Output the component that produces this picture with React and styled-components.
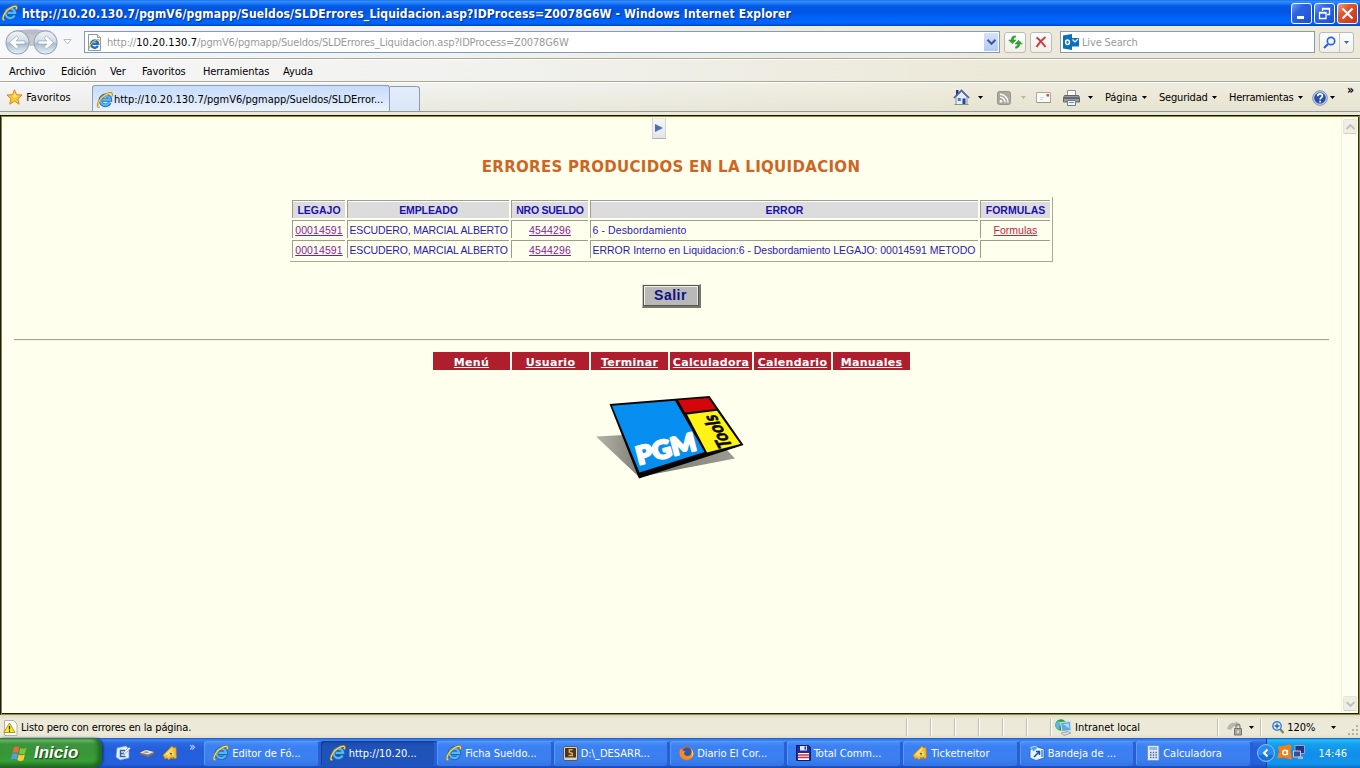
import React from "react";
import styled, { createGlobalStyle } from "styled-components";

const Global = createGlobalStyle`
  * { box-sizing: border-box; }
  body { margin: 0; background: #ece9d8; overflow: hidden; }
`;

const ui = `"DejaVu Sans Condensed", "DejaVu Sans", sans-serif`;

const Window = styled.div`
  display: flex; flex-direction: column; width: 1360px; height: 768px;
  font: 11px/14px ${ui}; color: #000; white-space: nowrap; cursor: default;
`;
const Label = styled.span`
  letter-spacing: ${(p) => p.$ls || 0}px;
  color: ${(p) => p.$color || "inherit"};
  ${(p) => p.$width && `width: ${p.$width}px;`}
  padding-top: ${(p) => p.$pt || 0}px;
  flex: none;
`;
const Svg = styled.svg`
  display: block; flex: none; overflow: visible;
  margin-left: ${(p) => p.$ml || 0}px;
  margin-top: ${(p) => p.$mt || 0}px;
`;
const Spacer = styled.div`flex: 1;`;

/* ---------- title bar ---------- */
const TitleBar = styled.div`
  height: 26px; flex: none; display: flex; align-items: center; padding: 0 2px 0 2px;
  background: linear-gradient(#0a5fe8 0, #3a93ff 1px, #2080fa 3px, #0459e6 6px, #0055e4 12px, #0063fb 18px, #0066ff 23px, #0050d8 25px, #0042bb 26px);
`;
const TitleText = styled.span`
  margin-left: 4px; margin-top: 1px; color: #fff; font: bold 12px/16px ${ui}; letter-spacing: 0.15px;
  text-shadow: 1px 1px 1px #052b83;
`;
const CaptionButton = styled.div`
  width: 21px; height: 21px; margin-left: 2px; border: 1px solid #fff; border-radius: 3px;
  display: grid; place-items: center;
  background: ${(p) => p.$close
    ? "linear-gradient(135deg, #f0a080, #e2562f 35%, #c8381a 90%)"
    : "linear-gradient(135deg, #6d9cf5, #2c62e2 35%, #2358dc 80%, #1b48b8)"};
`;

/* ---------- address row ---------- */
const AddressRow = styled.div`
  height: 33px; flex: none; display: flex; align-items: center; padding: 0 6px 0 5px;
  border-bottom: 1px solid #aca899;
  background: linear-gradient(90deg, #f6f8fa 0, #f1f2f0 400px, #ece9d8 1000px);
`;
const Field = styled.div`
  height: 22px; width: ${(p) => p.$width}px; margin-left: ${(p) => p.$ml}px; display: flex; align-items: center;
  border: 1px solid #7f9db9; background: #fff; padding-left: ${(p) => p.$pl}px; flex: none;
`;
const FieldText = styled.span`
  margin-left: ${(p) => p.$ml}px; padding-top: 2px; color: #9a9a9a; letter-spacing: ${(p) => p.$ls || 0}px;
`;
const Host = styled.span`color: #000; letter-spacing: 0.1px;`;
const DropButton = styled.div`
  width: 14px; height: 18px; margin-right: 1px; display: grid; place-items: center;
  background: linear-gradient(#d5e2fc, #b4c9f5);
`;
const SmallButton = styled.div`
  height: 21px; width: ${(p) => p.$width}px; margin-left: ${(p) => p.$ml}px; flex: none;
  border: 1px solid #b9bcc0; border-radius: 3px; display: flex; align-items: center; justify-content: center;
  background: linear-gradient(#fdfdfb, #f0efe8);
`;
const SearchSplit = styled.div`
  width: 14px; height: 19px; border-left: 1px solid #c4c6c8; display: grid; place-items: center; margin-left: 3px;
`;

/* ---------- menu and tabs ---------- */
const MenuRow = styled.div`
  height: 23px; flex: none; display: flex; align-items: center; padding: 2px 0 0 9px;
  border-bottom: 1px solid #aca899; border-top: 1px solid #fff;
  background: linear-gradient(90deg, #f6f7f7 0, #f1f1ee 500px, #ece9d8 1000px);
`;
const TabRow = styled.div`
  height: 30px; flex: none; display: flex; align-items: center;
  border-top: 1px solid #fff; border-bottom: 1px solid #919b9c;
  background: linear-gradient(rgba(255,255,255,.15), rgba(205,200,170,.18)), linear-gradient(90deg, #f3f4f6 0, #f0f0ea 500px, #ece9d8 1000px);
`;
const Tab = styled.div`
  align-self: flex-end; width: 298px; height: 26px; margin-left: 20px; padding: 2px 0 0 4px;
  display: flex; align-items: center; gap: 1px; border: 1px solid #8e9bbc; border-bottom: 0; border-radius: 3px 3px 0 0;
  background: linear-gradient(#c5dcfb, #dbe8fb 60%, #edf4fd);
`;
const NewTab = styled.div`
  align-self: flex-end; width: 30px; height: 25px; border: 1px solid #919bb4; border-left: 0; border-bottom: 0;
  border-radius: 0 3px 0 0; background: linear-gradient(#e4ecf9, #dbe6f7);
`;
const Command = styled.div`
  display: flex; align-items: center; width: ${(p) => p.$width}px; flex: none; padding-top: 1px;
`;
const CommandOverflow = styled.div`
  align-self: flex-start; width: 13px; padding-top: 1px; font: bold 12px/12px ${ui};
`;

/* ---------- document ---------- */
const Frame = styled.div`
  height: 603px; flex: none; padding-top: 3px; display: flex; background: #ece9d8;
`;
const Viewport = styled.div`
  flex: 1; display: flex; border: 1px solid #1d1d00; border-top-color: #111; border-right-color: #8a8a3c;
  border-bottom: 1px solid #8a8a3c; background: #ffffee;
  box-shadow: inset 0 1px #8f9026, inset 1px 0 #83845a, inset 0 -1px #222208, inset -1px 0 #33330c;
`;
const Page = styled.div`
  flex: 1; display: flex; flex-direction: column; align-items: center; padding-top: 2px;
`;
const ScrollTrack = styled.div`
  width: 17px; margin: 1px 1px 1px 0; padding: 2px 0 2px 1px; display: flex; flex-direction: column; justify-content: space-between;
  background: #fdfdf1; border-left: 1px solid #f3f2e0;
`;
const ScrollButton = styled.div`
  width: 14px; height: 15px; display: grid; place-items: center; background: #efeee4; border: 1px solid #e6e5d8;
  border-bottom-color: #cfcec0; border-radius: 2px;
`;
const Expander = styled.div`
  width: 14px; height: 21px; margin-right: 25px; padding: 0 0 1px 1px; display: grid; place-items: center; border: 1px solid #d3d4d9;
  border-top-color: #e8e8e8; border-bottom-color: #b0b2ba; background: linear-gradient(#f6f6f4, #e4e5ea);
`;
const Heading = styled.h1`
  margin: 18px 0 0; font: bold 15px/20px "DejaVu Sans", sans-serif; color: #cc6622; letter-spacing: 0.3px;
`;
const Table = styled.div`
  margin: 20px 0 0 1px; width: 763px; height: 65px; padding: 3px 0 0 2px; display: grid; align-content: start;
  grid-template-columns: 53px 162px 77px 388px 70px; grid-auto-rows: 18px; gap: 2px;
  border-right: 1px solid #aaa999; border-bottom: 1px solid #aaa999;
`;
const Cell = styled.div`
  border-left: 1px solid #9c9c90; border-top: 1px solid #9c9c90; padding: 1px 1px 0 ${(p) => (p.$left ? 1.5 : 1)}px;
  font: ${(p) => (p.$head ? "bold 10.5px" : "10.5px")}/16px "Liberation Sans", Arial, sans-serif;
  color: ${(p) => (p.$head ? "#1a0fb4" : "#2a20b8")};
  background: ${(p) => (p.$head ? "linear-gradient(#ffffff 1px, #dcdcdc 1px)" : "transparent")};
  text-align: ${(p) => (p.$left ? "left" : "center")};
  letter-spacing: ${(p) => p.$ls || 0}px;
`;
const Link = styled.a`
  text-decoration: underline; text-underline-offset: 1px; color: ${(p) => p.$color};
`;
const ExitButton = styled.div`
  margin: 22px 0 0 0; width: 59px; height: 24px; border: 1px solid #77776c; border-left-color: #c9c9ba; border-top-color: #eeeedd;
  border-right-width: 2px; border-bottom-width: 2px; display: flex;
`;
const ExitFace = styled.div`
  flex: 1; border: 1px solid #55554c; box-shadow: inset 1px 1px #f2f2e8, inset -1px 0 #e5e5dd; background: #b9b9b7;
  font: bold 14px/19px "Liberation Sans", Arial, sans-serif; color: #10108a; text-align: center; letter-spacing: 0.5px;
`;
const Rule = styled.div`
  align-self: stretch; margin: 31px 12px 0 13px; height: 2px; border-top: 1px solid #a5a595; border-bottom: 1px solid #f3f3e2; flex: none;
`;
const LinkBar = styled.div`
  margin-top: 11px; display: flex; gap: 2px;
`;
const BarLink = styled.div`
  width: ${(p) => p.$width}px; height: 18px; padding: 1px 0 0 1px; background: #ae1e2d; color: #fff; text-align: center;
  font: bold 11px/20px "DejaVu Sans", sans-serif; text-decoration: underline; letter-spacing: 0.3px;
`;

/* ---------- status bar ---------- */
const StatusBar = styled.div`
  height: 23px; flex: none; display: flex; align-items: center; padding-left: 3px; padding-top: 2px;
  background: linear-gradient(#dedbc6, #ece9d8 4px, #ece9d8 19px, #e2decd);
`;
const StatusPane = styled.div`
  width: ${(p) => p.$width}px; height: 17px; display: flex; align-items: center; flex: none;
  border-left: 1px solid #c2bfad; box-shadow: inset 1px 0 #fff; padding-left: ${(p) => p.$pl || 0}px;
`;

/* ---------- taskbar ---------- */
const Taskbar = styled.div`
  height: 30px; flex: none; display: flex; color: #fff;
  background: linear-gradient(#1c55cc 0, #3d87f2 2px, #2b68e0 5px, #245edb 12px, #2460de 26px, #1b47b0 30px);
`;
const Start = styled.div`
  width: 102px; display: flex; align-items: center; padding-left: 11px; border-radius: 0 9px 9px 0;
  background: linear-gradient(#2f7a2f 0, #6bb56b 2px, #3c943c 6px, #389638 16px, #379f37 23px, #256f25 29px);
  box-shadow: inset -4px -1px 4px #1f641f, 2px 0 2px #163f99;
`;
const StartText = styled.span`
  margin-left: 6px; font: italic bold 17px/22px "Liberation Sans", Arial, sans-serif; text-shadow: 1px 1px 1px #174017;
`;
const QuickLaunch = styled.div`
  width: 102px; display: flex; padding: 7px 0 0 13px;
`;
const QuickMore = styled.span`
  margin: -5px 0 0 11px; font-size: 12px; color: #cfe0ff;
`;
const TaskButton = styled.div`
  width: 116.5px; flex: none; display: flex; align-items: center; padding: 0 0 1px 9px; margin: 3px 0 2px;
  border-radius: 3px;
  box-shadow: inset 1px 1px ${(p) => (p.$active ? "#153a8e" : "#5a9bfa")}, inset -2px 0 #245edb, inset -3px 0 #2a61cc;
  background: ${(p) => p.$active ? "linear-gradient(#1a47a6, #1e52b7 20%, #1e54bc)" : "linear-gradient(#4b93fb, #3c81f3 20%, #3a7ef0 75%, #3374e4)"};
`;
const Tray = styled.div`
  flex: 1; margin-left: 13px; display: flex; align-items: center; gap: 16px;
  border-left: 1px solid #1042af;
  background: linear-gradient(#0c59b9 0, #2abaf8 2px, #16a0ee 6px, #0f8eea 16px, #1295ec 26px, #0d6cc0 30px);
`;

/* ---------- drawings ---------- */
const IE = ({ s = 16, ml, mt }) => (
  <Svg width={s} height={s} viewBox="0 0 16 16" $ml={ml} $mt={mt}>
    <path d="M12.8 10.6A5 5 0 1 1 13.3 8H5.5" fill="none" stroke="#1d62b5" strokeWidth="3.6" />
    <path d="M12.6 10.6A4.8 4.8 0 1 1 13.1 7.9H5.6" fill="none" stroke="#53b7f2" strokeWidth="2.2" />
    <path d="M2.4 14.8C.2 15.5.2 12.6 2.1 9.2 4.6 4.9 10.2.6 13.6 1c1.6.2 1.6 1.8.7 3.6" fill="none" stroke="#a97d12" strokeWidth="1.9" />
    <path d="M2.4 14.6C.6 15.1.5 12.6 2.3 9.2 4.8 4.9 10.3 1 13.5 1.3c1.3.1 1.2 1.6.5 3" fill="none" stroke="#ffd84d" strokeWidth="1.2" />
  </Svg>
);
const Down = ({ ml, mt, c = "#000" }) => (
  <Svg width="5" height="3" viewBox="0 0 5 3" $ml={ml} $mt={mt}><path d="M0 0h5L2.5 3z" fill={c} /></Svg>
);
const NavButtons = () => (
  <Svg width="54" height="27" viewBox="0 0 54 27">
    <defs>
      <linearGradient id="orb" x1="0" y1="0" x2="0" y2="1">
        <stop offset="0" stopColor="#eef2f6" /><stop offset=".45" stopColor="#d3dee9" /><stop offset=".55" stopColor="#a9bccf" /><stop offset="1" stopColor="#e2f2fa" />
      </linearGradient>
    </defs>
    <path d="M8 2C18 0 36 0 46 2L49 13H4z" fill="#b9bec6" />
    <path d="M22 5h10v12H22z" fill="#c3c8d0" />
    {[12.5, 40.5].map((x) => (
      <g key={x}>
        <circle cx={x} cy="13.5" r="12" fill="#98a4b2" />
        <circle cx={x} cy="13.5" r="11" fill="url(#orb)" />
      </g>
    ))}
    <path d="M4.500 13.500l7-6.500 2.300 2.200-2.700 2.700H20v3.200h-8.900l2.700 2.700-2.300 2.200z" fill="#fff" stroke="#93a2b4" strokeWidth=".7" />
    <path d="M48.500 13.500l-7-6.500-2.300 2.200 2.700 2.700H33v3.200h8.900l-2.700 2.700 2.300 2.200z" fill="#fff" stroke="#93a2b4" strokeWidth=".7" />
  </Svg>
);
const PageIE = () => (
  <Svg width="16" height="17" viewBox="0 0 16 17">
    <path d="M1.500.5h9l3 3v13h-12z" fill="#fff" stroke="#8f9aa8" />
    <path d="M10.500.5v3h3" fill="#dde4ec" stroke="#8f9aa8" />
    <g transform="translate(1.500 4) scale(.72)">
      <path d="M13 10.800A5 5 0 1 1 13.500 8H5.500" fill="none" stroke="#1f70cc" strokeWidth="3.300" />
      <path d="M2 14.500C0 13 4 6 9 3.500s7-1.500 5 1.500" fill="none" stroke="#e3b62c" strokeWidth="1.600" />
    </g>
  </Svg>
);
const Refresh = () => (
  <Svg width="15" height="14" viewBox="0 0 15 14">
    <path d="M7.500.8C4.800.8 3.200 2.200 3.200 5H.6l3.800 3.800L8 5H5.500c0-1.600.7-2.400 2-2.700z" fill="#2ea52e" stroke="#1b7a1e" strokeWidth=".4" />
    <path d="M7.500 13.200c2.700 0 4.300-1.400 4.300-4.200h2.600l-3.800-3.800L7 9h2.500c0 1.600-.7 2.400-2 2.700z" fill="#2ea52e" stroke="#1b7a1e" strokeWidth=".4" />
  </Svg>
);
const Stop = () => (
  <Svg width="12" height="12" viewBox="0 0 12 12">
    <path d="M1.500 1.500c3 2 6 5.500 9 9.500M10.500 1C7 3.500 4 7 1.500 11" fill="none" stroke="#c93a45" strokeWidth="2" />
  </Svg>
);
const Outlook = () => (
  <Svg width="16" height="16" viewBox="0 0 16 16">
    <path d="M8 4h8v8.500H8z" fill="#0a70c0" />
    <path d="M9.500 5.500l2.500 2.500 3-3" fill="none" stroke="#fff" strokeWidth="1.200" />
    <path d="M0 1.500L9 0v16l-9-1.500z" fill="#0a6fbd" />
    <ellipse cx="4.500" cy="8.200" rx="1.900" ry="2.300" fill="none" stroke="#fff" strokeWidth="1.500" />
  </Svg>
);
const Lens = () => (
  <Svg width="13" height="13" viewBox="0 0 13 13" $ml={2}>
    <path d="M1 12l4-4" stroke="#2a5fd0" strokeWidth="2.200" />
    <circle cx="8" cy="5" r="3.700" fill="#eef6ff" stroke="#2f63d6" strokeWidth="1.700" />
  </Svg>
);
const Star = () => (
  <Svg width="16" height="16" viewBox="0 0 16 16" $ml={7}>
    <path d="M7.500.8l2 4.900 5.600.3-4.300 3.700 1.400 5.500-4.700-3-4.800 3L4 9.700-.1 6l5.600-.3z" fill="#ffc933" stroke="#e0841a" />
    <path d="M7.500 3.500l1 3.200 3 .3-5 1.500z" fill="#fff3b0" />
  </Svg>
);
const Home = () => (
  <Svg width="17" height="17" viewBox="0 0 17 17">
    <path d="M3 1h2.500v5H3z" fill="#26348c" />
    <path d="M3 8v7.500h11V8L8.500 2.500z" fill="#e6edf8" stroke="#8791a8" />
    <path d="M.8 9L8.500 1.500 16.200 9" fill="none" stroke="#5265a0" strokeWidth="1.700" />
    <path d="M9.500 9.500h3v6h-3z" fill="#26429c" /><path d="M4.800 9h3v3h-3z" fill="#4c79cf" />
    <path d="M1.500 15.500h14" stroke="#7a9a78" />
  </Svg>
);
const Rss = () => (
  <Svg width="14" height="14" viewBox="0 0 14 14">
    <rect x=".5" y=".5" width="13" height="13" rx="2" fill="#aaa99f" stroke="#96958b" />
    <circle cx="4" cy="10.300" r="1.300" fill="#fff" />
    <path d="M3 6.300A5 5 0 0 1 8 11.500M3 3.200a8 8 0 0 1 8 8.300" fill="none" stroke="#fff" strokeWidth="1.400" />
  </Svg>
);
const Mail = () => (
  <Svg width="15" height="11" viewBox="0 0 15 11">
    <path d="M.5.5h14v10H.5z" fill="#fbfbf8" stroke="#aaa8a2" /><path d="M10.500 2h2.500v2.500h-2.500z" fill="#d84848" />
    <path d="M4 5.500h4M4 7.500h3" stroke="#d9d9da" /><path d="M1 10.500h14" stroke="#96948c" />
  </Svg>
);
const Printer = () => (
  <Svg width="17" height="16" viewBox="0 0 17 16">
    <path d="M4.500.5h8v5h-8z" fill="#fff" stroke="#8d8f96" />
    <path d="M1.500 5.500h14l1 2v4.500h-16V7.500z" fill="#9a9ba2" stroke="#63646b" />
    <path d="M1 8h15" stroke="#55565c" strokeWidth="1.500" />
    <path d="M4.500 10.500h8v5h-8z" fill="#eef6fc" stroke="#747b85" /><path d="M6 12.500h5" stroke="#45a0cf" />
  </Svg>
);
const Help = () => (
  <Svg width="16" height="16" viewBox="0 0 16 16">
    <circle cx="8" cy="8" r="7.300" fill="#c6d2e8" stroke="#8694b4" /><circle cx="8" cy="8" r="5.800" fill="#2750ad" />
    <path d="M5.700 6.300C5.700 3 10.600 3.200 10.400 6 10.300 7.700 8.100 7.600 8.100 9.600M8.100 10.800v1.600" fill="none" stroke="#fff" strokeWidth="1.700" />
  </Svg>
);
const Logo = () => (
  <Svg width="148" height="84" viewBox="0 0 148 84" $mt={25} $ml={-3}>
    <defs>
      <linearGradient id="shade" x1="0" x2="1"><stop offset="0" stopColor="#b5b5aa" /><stop offset=".35" stopColor="#77776f" /><stop offset="1" stopColor="#9c9c92" /></linearGradient>
    </defs>
    <path d="M0 41.500L28 40 130 54l9 9.500L43 82z" fill="url(#shade)" />
    <path d="M13.500 9L113.500 1 147.500 50 43 83.500z" fill="#050505" />
    <path d="M16 10.800L79 5.800 108.500 57 43.500 77.500z" fill="#068ef0" />
    <path d="M82 5.300L112.500 3 120 14 89 17.500z" fill="#d4060c" />
    <path d="M91 19.500L121 15.800 144.500 49 111 57.500z" fill="#fff215" />
    <text transform="translate(42.500 70) rotate(-14.500)" fill="#fff" stroke="#fff" strokeWidth="2.200" strokeLinejoin="round" fontFamily="Lato, DejaVu Sans, sans-serif" fontWeight="900" fontSize="25" textLength="61" lengthAdjust="spacingAndGlyphs">PGM</text>
    <text transform="matrix(-.47 -.88 .98 -.12 137 52)" fill="#080800" stroke="#080800" strokeWidth=".6" fontFamily="Lato, DejaVu Sans, sans-serif" fontWeight="900" fontSize="20" textLength="37" lengthAdjust="spacingAndGlyphs">Tools</text>
  </Svg>
);
const Warn = () => (
  <Svg width="15" height="16" viewBox="0 0 15 16">
    <path d="M1.500.5h9l3.500 3.500v11.500H1.500z" fill="#fff" stroke="#b2b2aa" />
    <path d="M6.500 3L12 12.500H.8z" fill="#ffe92e" stroke="#b49a08" strokeLinejoin="round" /><path d="M6.500 6v3.500M6.500 10.500v1.300" stroke="#222" strokeWidth="1.300" />
  </Svg>
);
const NetZone = () => (
  <Svg width="17" height="17" viewBox="0 0 17 17">
    <circle cx="6" cy="6" r="5.800" fill="#2f9e3b" /><path d="M2 3c3-3 5 1 3 3s1 4-1 5C1 9-1 6 2 3z" fill="#5bb9ea" />
    <path d="M5.500 3.500l10-1 .5 9-9 1z" fill="#5fa8e0" stroke="#d3e2ee" /><path d="M8 5l6-.6.3 5z" fill="#a6ddf8" />
    <path d="M6 14l7-1.500 3 1.500-7 2.500z" fill="#dadbe0" stroke="#80828c" strokeWidth=".6" />
  </Svg>
);
const Shield = () => (
  <Svg width="17" height="15" viewBox="0 0 17 15" $mt={1}>
    <path d="M1 8C3 2 6 1 10 2l-1-2 5 3-3 4V5C8 5 6 6 5 9z" fill="#b7b6ac" />
    <path d="M8.500 7.500h7v6.500h-7z" fill="#aaa99f" stroke="#77766e" /><path d="M10 7V5.500a2 2 0 0 1 4 0V7" fill="none" stroke="#88877e" strokeWidth="1.300" />
    <path d="M12 9.500v2.500" stroke="#eee" strokeWidth="1.500" />
  </Svg>
);
const ZoomIcon = () => (
  <Svg width="12" height="13" viewBox="0 0 12 13">
    <path d="M8 8l3.500 4" stroke="#8a7a50" strokeWidth="2" /><circle cx="5" cy="5" r="4.200" fill="#e4f3ff" stroke="#3b7fce" strokeWidth="1.400" />
    <path d="M2.500 5h5M5 2.500v5" stroke="#1f60bb" strokeWidth="1.400" />
  </Svg>
);
const Flag = () => (
  <Svg width="17" height="17" viewBox="0 0 17 17">
    <path d="M3 2.500C5 1 7 1.500 8.200 2.500L7 8C5.500 7 3.500 7 1.600 8z" fill="#f1683a" />
    <path d="M9.200 3c2 1 4 .8 6.300-.3L14 8.500c-2 1-4 1-6 0z" fill="#7fc53a" />
    <path d="M1.400 9c2-1 4-1 5.400 0l-1.300 5.500C4 13.500 2 13.500 0 14.500z" fill="#5a9bf0" />
    <path d="M7.700 9.600c2 1 4 .9 6.200 0l-1.500 5.700c-2 1-4.200.9-6.100-.2z" fill="#fbcb3c" />
  </Svg>
);
const DesktopIcon = () => (
  <Svg width="16" height="16" viewBox="0 0 16 16">
    <path d="M2 3l9-2 3 3v9l-9 2-4-3z" fill="#e6f1fc" stroke="#6a9cd8" strokeWidth=".7" />
    <path d="M10 5.500H5.500v6h5M6 8.500h4" fill="none" stroke="#2c67b0" strokeWidth="1.500" />
    <path d="M8 8l6-6 1.500 1.500L9.500 9z" fill="#fff" stroke="#5077a8" strokeWidth=".6" />
  </Svg>
);
const Drive = () => (
  <Svg width="16" height="9" viewBox="0 0 16 9" $ml={8} $mt={4}>
    <path d="M.5 3.500L7 .5l8.500 2.500v2L9 8.500.5 5.500z" fill="#74787e" stroke="#40506e" strokeWidth=".5" /><path d="M1 3.500L7 1l8 2-6.500 2.500z" fill="#e6e6e6" />
    <path d="M4 3.300l3-1 3 1-2 .8z" fill="#888" />
  </Svg>
);
const Ticket = ({ ml }) => (
  <Svg width="16" height="16" viewBox="0 0 16 16" $ml={ml}>
    <path d="M1 10L10 1l2 2 2-1 .5 11-2 1-1-2-1.500 2-1-1.500L7 15l-2-2-2 1z" fill="#f4bd32" stroke="#b67b16" strokeWidth=".7" />
    <path d="M4 10l6-6M6 11l5-4M10 10l2-1" stroke="#fff0a0" strokeWidth="1.300" /><path d="M8 8h2v1.500H8z" fill="#7b5215" />
  </Svg>
);
const Sublime = () => (
  <Svg width="15" height="15" viewBox="0 0 15 15">
    <rect x=".5" y=".5" width="14" height="14" rx="1.500" fill="#d9d2c5" stroke="#61594f" /><rect x="2" y="2" width="11" height="9.500" fill="#40372e" />
    <path d="M9.700 3.700H6.300v2.500l3 1v2.300H5.500" fill="none" stroke="#f2a33b" strokeWidth="1.500" />
  </Svg>
);
const Firefox = () => (
  <Svg width="15" height="15" viewBox="0 0 15 15">
    <circle cx="7.500" cy="7.500" r="7" fill="#e9631c" /><circle cx="8" cy="6.300" r="4.800" fill="#2b57ad" />
    <path d="M1 3c2 0 3 1 3.500 2l2 .5-1.500 1.500c0 3 4 4 6.500 2L13 5l1.500 3c-1 5-6 7-10 5S0 8 1 3z" fill="#f58b22" />
    <path d="M12 2.500c3 3 3 7 0 9.500 1.500-3 1-6 0-9.500z" fill="#ffd23c" />
  </Svg>
);
const Floppy = () => (
  <Svg width="15" height="16" viewBox="0 0 15 16">
    <path d="M.5.5h12l2 2v13H.5z" fill="#1d2d9d" stroke="#101a6b" /><path d="M4 1h7v4.500H4z" fill="#e4e6f1" /><path d="M8.500 1.500h1.500v3H8.500z" fill="#1d2d9d" />
    <path d="M2 8h11v7H2z" fill="#fff" /><path d="M2 10h11M2 12.500h11" stroke="#dc2d35" strokeWidth="1.300" />
  </Svg>
);
const Inbox = () => (
  <Svg width="16" height="16" viewBox="0 0 16 16">
    <path d="M1 5l7-3 7 2v9l-8 2.500L1 13z" fill="#e7f2fd" stroke="#2c64ae" strokeWidth=".8" /><path d="M1.500 2.500l5-1.500 2 2-4 4z" fill="#4aa0ea" stroke="#fff" strokeWidth=".6" />
    <path d="M5 12l5-5M7 6.500h3.500V10" fill="none" stroke="#1e4f9c" strokeWidth="1.500" /><path d="M13 5v7" stroke="#3f8de0" strokeWidth="1.500" />
  </Svg>
);
const CalcIcon = () => (
  <Svg width="13" height="16" viewBox="0 0 13 16" $ml={2}>
    <rect x=".5" y=".5" width="11.500" height="15" rx="1" fill="#dfe9f7" stroke="#7392bd" /><rect x="2.500" y="2" width="7.500" height="3" fill="#8cb8e3" />
    {[7.500, 10, 12.500].map((y) => <path key={y} d={`M3 ${y}h1.500M5.700 ${y}h1.500M8.400 ${y}h1.500`} stroke="#4c6f9e" strokeWidth="1.400" />)}
  </Svg>
);
const TrayIcons = () => (
  <Svg width="46" height="20" viewBox="0 0 46 20" $ml={-10}>
    <circle cx="9" cy="10" r="8.500" fill="#2b8bee" stroke="#9cd4fb" strokeWidth=".8" /><path d="M1.500 12a8 8 0 0 0 15 0z" fill="#1b6fd6" />
    <path d="M10.500 6.500L7 10l3.500 3.500" fill="none" stroke="#fff" strokeWidth="1.900" />
    <path d="M21 3.500l4-.5 8-1.500 1.500 2-1 4 1.500 8-1.500 1-7-2-5.500 1-.8-2 1.800-4.500z" fill="#f47f16" />
    <circle cx="28" cy="9.500" r="2.300" fill="none" stroke="#fff" strokeWidth="1.400" /><path d="M30.500 7v5" stroke="#fff" strokeWidth="1.200" />
    <path d="M38 2.500h9.500v8H38z" fill="#26357e" stroke="#9aa3cc" /><path d="M36.500 8h7v6h-7z" fill="#384c98" stroke="#c6cbe2" /><path d="M41 13.500h5v2.500h-5z" fill="#aab1c9" />
  </Svg>
);

const menu = [["Archivo", 52], ["Edición", 49], ["Ver", 32], ["Favoritos", 61], ["Herramientas", 80], ["Ayuda", 40]];
const bar = [["Menú", 77], ["Usuario", 77], ["Terminar", 77], ["Calculadora", 82], ["Calendario", 77], ["Manuales", 77]];
const tasks = [
  ["Editor de Fó...", <IE />], ["http://10.20...", <IE />, true], ["Ficha Sueldo...", <IE />], ["D:\\_DESARR...", <Sublime />],
  ["Diario El Cor...", <Firefox />], ["Total Comm...", <Floppy />], ["Ticketneitor", <Ticket />], ["Bandeja de ...", <Inbox />], ["Calculadora", <CalcIcon />],
];
const heads = [["LEGAJO", 0], ["EMPLEADO", -0.1], ["NRO SUELDO", -0.25], ["ERROR", 0], ["FORMULAS", 0]];
const rows = [
  ["6 - Desbordamiento", "Formulas", 0.1],
  ["ERROR Interno en Liquidacion:6 - Desbordamiento LEGAJO: 00014591 METODO", "", -0.03],
];

export default function App() {
  return (
    <Window>
      <Global />
      <TitleBar>
        <IE />
        <TitleText>http://10.20.130.7/pgmV6/pgmapp/Sueldos/SLDErrores_Liquidacion.asp?IDProcess=Z0078G6W - Windows Internet Explorer</TitleText>
        <Spacer />
        <CaptionButton><Svg width="13" height="13"><path d="M2 9h7v3H2z" fill="#fff" /></Svg></CaptionButton>
        <CaptionButton><Svg width="13" height="13"><path d="M4.500 4V1.500h7v6H9M4 2h8M1.500 5.500h6.500v6H1.500zM1 6h7" fill="none" stroke="#fff" strokeWidth="1.300" /></Svg></CaptionButton>
        <CaptionButton $close><Svg width="13" height="13"><path d="M1.500 1.500l10 10M11.500 1.500l-10 10" stroke="#fff" strokeWidth="2.200" /></Svg></CaptionButton>
      </TitleBar>

      <AddressRow>
        <NavButtons />
        <Svg width="9" height="6" viewBox="0 0 9 6" $ml={4}><path d="M.8.5h7.400L4.500 5z" fill="#fff" stroke="#b8bdc6" /></Svg>
        <Field $width={916} $ml={12} $pl={2}>
          <PageIE />
          <FieldText $ml={4} $ls={-0.16}>http://<Host>10.20.130.7</Host>/pgmV6/pgmapp/Sueldos/SLDErrores_Liquidacion.asp?IDProcess=Z0078G6W</FieldText>
          <Spacer />
          <DropButton><Svg width="9" height="6"><path d="M.5.8l4 4 4-4" fill="none" stroke="#3d5a94" strokeWidth="2" /></Svg></DropButton>
        </Field>
        <SmallButton $width={22} $ml={4}><Refresh /></SmallButton>
        <SmallButton $width={22} $ml={4}><Stop /></SmallButton>
        <Field $width={255} $ml={8} $pl={2}><Outlook /><FieldText $ml={3} $ls={-0.15}>Live Search</FieldText></Field>
        <SmallButton $width={35} $ml={4}><Lens /><SearchSplit><Down c="#3a63c4" /></SearchSplit></SmallButton>
      </AddressRow>

      <MenuRow>{menu.map(([t, w]) => <Label key={t} $width={w} $ls={-0.1}>{t}</Label>)}</MenuRow>

      <TabRow>
        <Star />
        <Label $width={49} $pt={1}>&nbsp;Favoritos</Label>
        <Tab><IE /><Label $ls={-0.02}>http://10.20.130.7/pgmV6/pgmapp/Sueldos/SLDError...</Label></Tab>
        <NewTab />
        <Spacer />
        <Command $width={44}><Home /><Down ml={8} /></Command>
        <Command $width={39}><Rss /><Down ml={10} c="#b8b6a8" /></Command>
        <Command $width={27}><Mail /></Command>
        <Command $width={42}><Printer /><Down ml={8} /></Command>
        <Command $width={54}><Label $width={37} $ls={-0.1}>Página</Label><Down /></Command>
        <Command $width={70}><Label $width={53} $ls={-0.2}>Seguridad</Label><Down /></Command>
        <Command $width={83}><Label $width={69} $ls={-0.25}>Herramientas</Label><Down /></Command>
        <Command $width={35}><Help /><Down ml={2} /></Command>
        <CommandOverflow>»</CommandOverflow>
      </TabRow>

      <Frame>
        <Viewport>
          <Page>
            <Expander><Svg width="8" height="8"><path d="M0 0l8 4-8 4z" fill="#4a72b0" /></Svg></Expander>
            <Heading>ERRORES PRODUCIDOS EN LA LIQUIDACION</Heading>
            <Table>
              {heads.map(([t, ls]) => <Cell key={t} $head $ls={ls}>{t}</Cell>)}
              {rows.map(([err, link, ls]) => (
                <React.Fragment key={err}>
                  <Cell $ls={0.1}><Link $color="#8a1a9a">00014591</Link></Cell>
                  <Cell $left $ls={-0.17}>ESCUDERO, MARCIAL ALBERTO</Cell>
                  <Cell $ls={0.15}><Link $color="#8a1a9a">4544296</Link></Cell>
                  <Cell $left $ls={ls}>{err}</Cell>
                  <Cell>{link && <Link $color="#cc2040">{link}</Link>}</Cell>
                </React.Fragment>
              ))}
            </Table>
            <ExitButton><ExitFace>Salir</ExitFace></ExitButton>
            <Rule />
            <LinkBar>{bar.map(([t, w]) => <BarLink key={t} $width={w}>{t}</BarLink>)}</LinkBar>
            <Logo />
          </Page>
          <ScrollTrack>
            <ScrollButton><Svg width="9" height="6"><path d="M.5 5l4-4 4 4" fill="none" stroke="#c2c1b4" strokeWidth="1.800" /></Svg></ScrollButton>
            <ScrollButton><Svg width="9" height="6"><path d="M.5 1l4 4 4-4" fill="none" stroke="#c2c1b4" strokeWidth="1.800" /></Svg></ScrollButton>
          </ScrollTrack>
        </Viewport>
      </Frame>

      <StatusBar>
        <Warn /><Label $ls={-0.14} $pt={1}>&nbsp;Listo pero con errores en la página.</Label>
        <Spacer />
        {[0, 1, 2, 3, 4, 5].map((i) => <StatusPane key={i} $width={24} />)}
        <StatusPane $width={167} $pl={4}><NetZone /><Label $ls={-0.05} $pt={1}>&nbsp;Intranet local</Label></StatusPane>
        <StatusPane $width={43} $pl={8}><Shield /><Down ml={6} /></StatusPane>
        <StatusPane $width={86} $pl={11}><ZoomIcon /><Label $width={44} $pt={1}>&nbsp;120%</Label><Down ml={3} /></StatusPane>
        <Svg width="14" height="14" $mt={4}>{[[10, 2], [6, 6], [10, 6], [2, 10], [6, 10], [10, 10]].map(([x, y]) => <rect key={x + "-" + y} x={x} y={y} width="2" height="2" fill="#b8b4a2" />)}</Svg>
      </StatusBar>

      <Taskbar>
        <Start><Flag /><StartText>Inicio</StartText></Start>
        <QuickLaunch><DesktopIcon /><Drive /><Ticket ml={7} /><QuickMore>»</QuickMore></QuickLaunch>
        {tasks.map(([t, icon, active]) => <TaskButton key={t} $active={active}>{icon}<Label $pt={1}>&nbsp;{t}</Label></TaskButton>)}
        <Tray><TrayIcons /><Label $pt={1}>14:46</Label></Tray>
      </Taskbar>
    </Window>
  );
}
